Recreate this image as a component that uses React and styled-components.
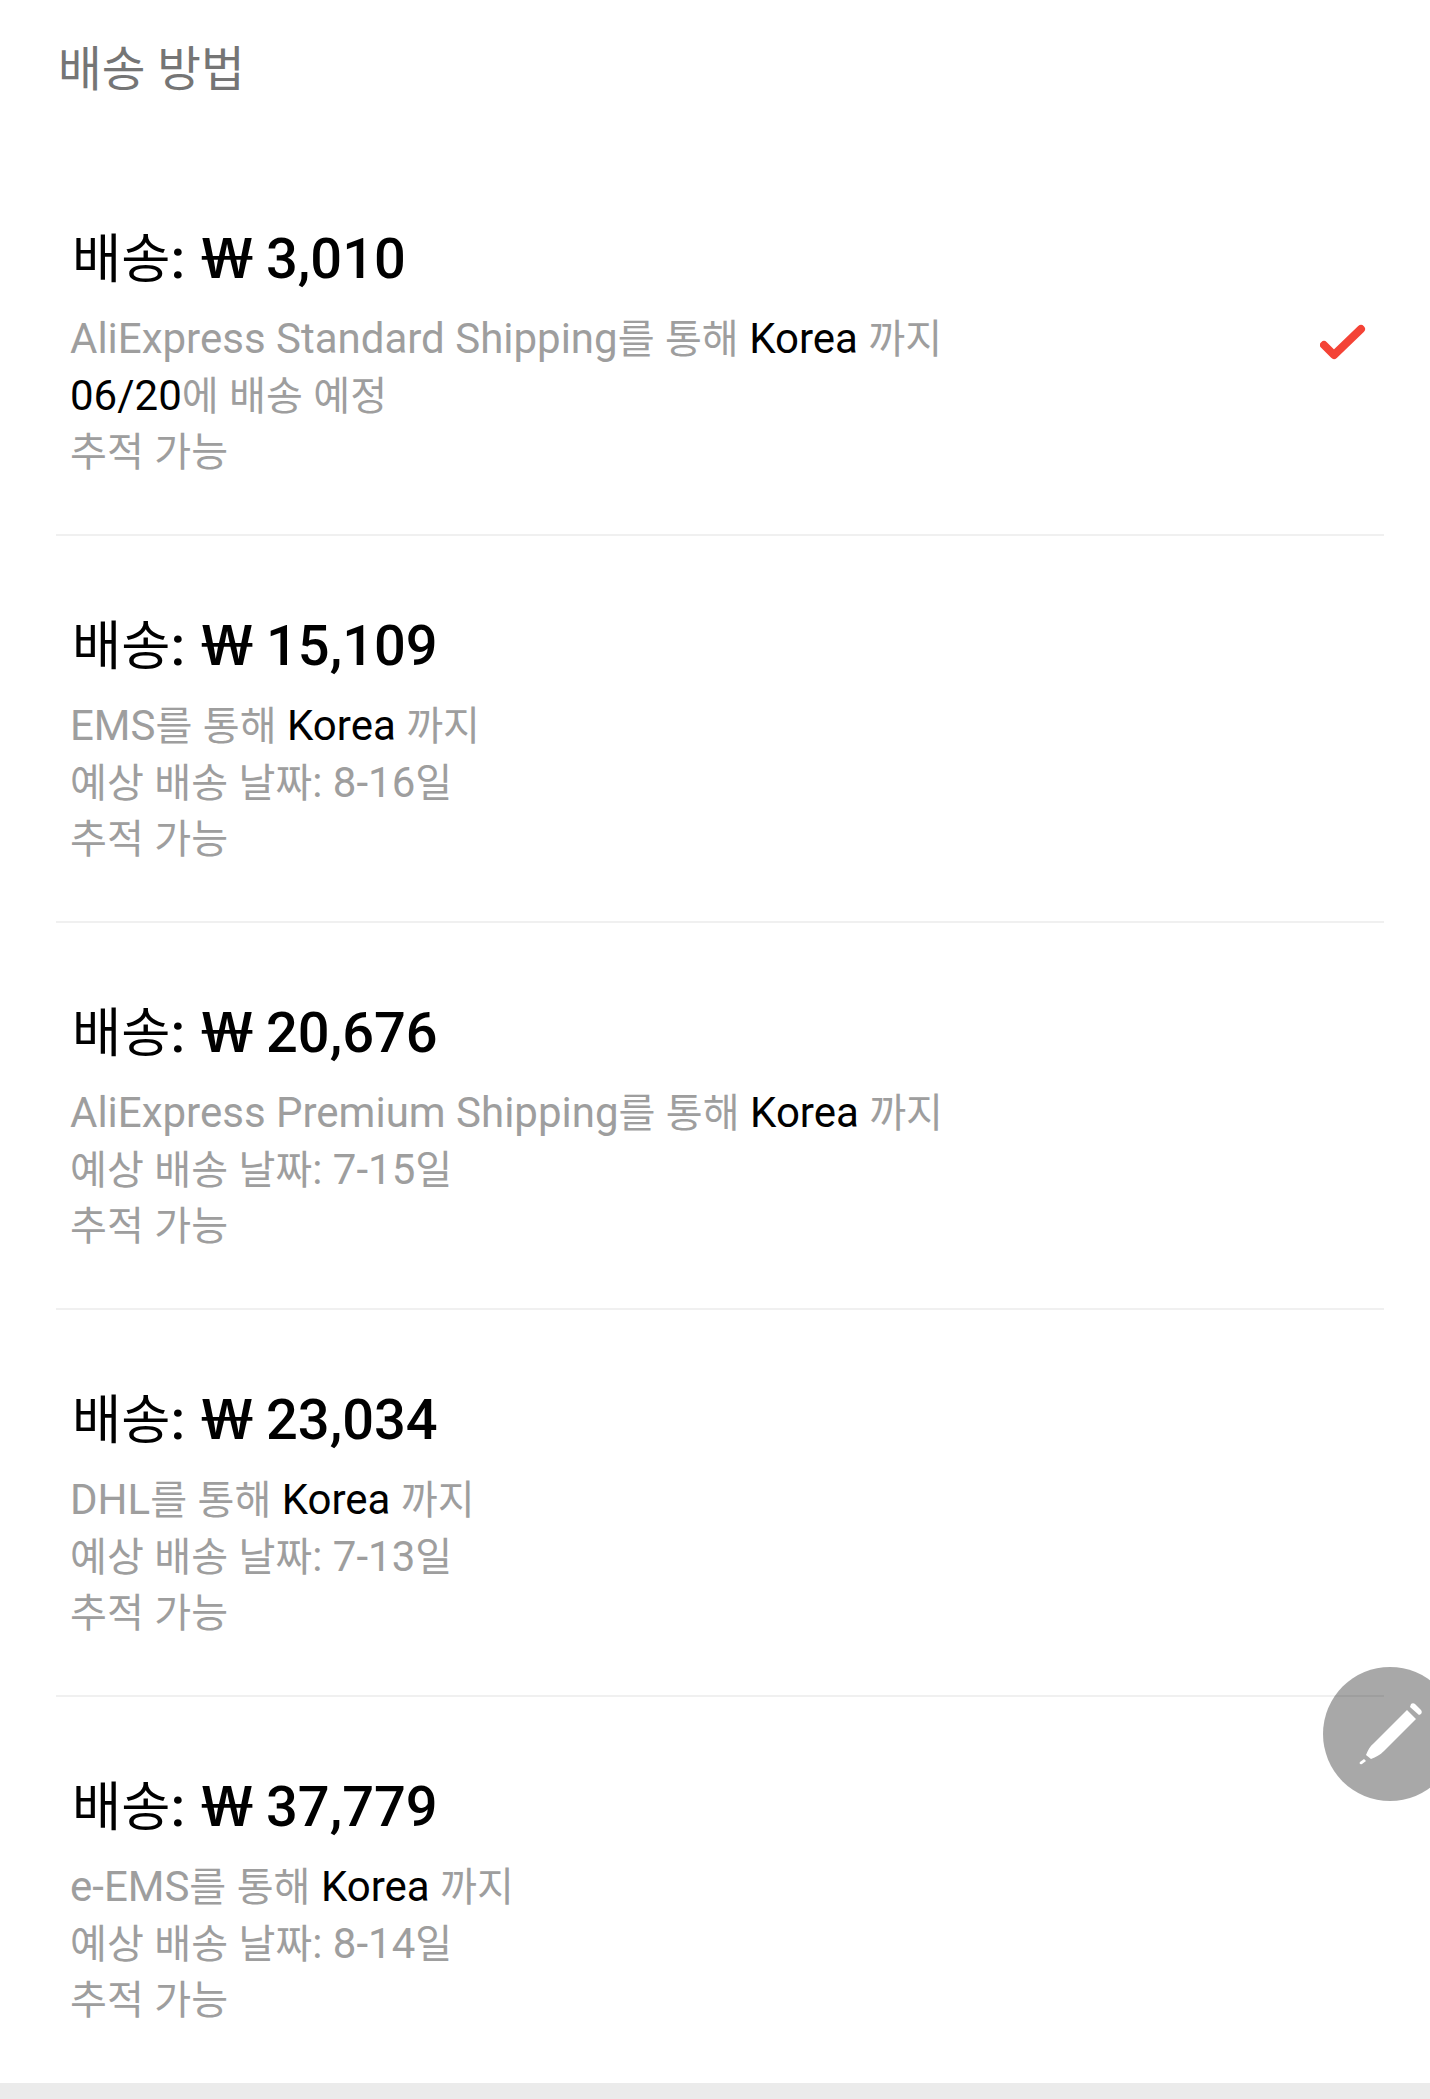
import styled, { createGlobalStyle } from "styled-components";

const methods = [
  { price: "3,010", carrier: "AliExpress Standard Shipping", date: "06/20", selected: true },
  { price: "15,109", carrier: "EMS", range: "8-16" },
  { price: "20,676", carrier: "AliExpress Premium Shipping", range: "7-15" },
  { price: "23,034", carrier: "DHL", range: "7-13" },
  { price: "37,779", carrier: "e-EMS", range: "8-14" },
];

// Hangul runs are set slightly smaller than the Latin around them
const Ko = ({ children }) =>
  children.split(/([가-힣]+)/).map((part, i) => (i % 2 ? <Hangul key={i}>{part}</Hangul> : part));

const App = () => {
  return (
    <Page>
      <GlobalStyle />
      <Title>배송 방법</Title>
      <List>
        {methods.map((m) => (
          <Row key={m.price}>
            <Price>
              <Ko>배송: </Ko>
              <Won>₩</Won> {m.price}
            </Price>
            <Line>
              <Ko>{`${m.carrier}를 통해 `}</Ko>
              <Dark>Korea</Dark> <Ko>까지</Ko>
            </Line>
            {m.date ? (
              <Line>
                <Dark>{m.date}</Dark>
                <Ko>에 배송 예정</Ko>
              </Line>
            ) : (
              <Line>
                <Ko>{`예상 배송 날짜: ${m.range}일`}</Ko>
              </Line>
            )}
            <Line>
              <Ko>추적 가능</Ko>
            </Line>
            {m.selected && (
              <Check viewBox="0 0 46 36">
                <path d="M4 21 L14 31 L41 5" />
              </Check>
            )}
          </Row>
        ))}
      </List>
      <BottomBar />
      <Fab>
        <svg width="70" height="70" viewBox="0 0 70 70" fill="#fff">
          <path d="M52 11 L61 20 L29 52 C25 56 21 58 16 60 L11 56 C13 51 15 47 19 44 Z" />
          <path d="M56 5 C57 4 59 4 60 5 L66 11 C67 12 67 14 66 15 L64 16 L55 8 Z" />
          <path d="M9 60 L11 62 L7 65 C5 66 4 64 5 63 Z" />
        </svg>
      </Fab>
    </Page>
  );
};

export default App;

const GlobalStyle = createGlobalStyle`
  body {
    margin: 0;
    background: #fff;
    font-family: Roboto, "Noto Sans CJK KR", sans-serif;
  }
`;

const Page = styled.div`
  position: relative;
  width: 1430px;
  height: 2099px;
  overflow: hidden;
  background: #fff;
`;

const Title = styled.h1`
  margin: 0;
  padding: 36px 0 0 58px;
  height: 112px;
  box-sizing: border-box;
  font-size: 47.5px;
  line-height: 68px;
  font-weight: 400;
  color: #757575;
`;

const List = styled.div`
  padding: 0 46px 0 56px;
`;

const Row = styled.div`
  position: relative;
  height: 387px;
  box-sizing: border-box;
  padding: 76px 0 0 16px;
  border-bottom: 2px solid #f0f0f0;

  &:first-child {
    height: 424px;
    padding-top: 113px;
  }

  &:last-child {
    border-bottom: none;
  }
`;

const Hangul = styled.span`
  font-size: 0.955em;
  line-height: 0;
`;

const Price = styled.div`
  margin: 0 0 18px 0;
  font-size: 56px;
  line-height: 68px;
  font-weight: 500;
  color: #000;

  ${Hangul} {
    font-weight: 400;
  }
`;

// the won sign is a single-bar glyph, widened to the width of a capital W
const Won = styled.span`
  display: inline-block;
  width: 50px;
  margin-left: 3px;
  line-height: 0;
  text-align: center;
  font-family: "Noto Sans", sans-serif;
  transform: scaleX(1.35);
`;

const Line = styled.div`
  margin-left: -2px;
  font-size: 42px;
  line-height: 56.6px;
  color: #9e9e9e;
`;

const Dark = styled.span`
  color: #000;
`;

const Check = styled.svg`
  position: absolute;
  right: 18px;
  top: 212px;
  width: 46px;
  height: 36px;
  fill: none;
  stroke: #f44336;
  stroke-width: 8;
  stroke-linecap: round;
  stroke-linejoin: round;
`;

const BottomBar = styled.div`
  position: absolute;
  left: 0;
  right: 0;
  bottom: 0;
  height: 16px;
  background: #ebebeb;
`;

const Fab = styled.div`
  position: absolute;
  left: 1323px;
  top: 1667px;
  width: 134px;
  height: 134px;
  border-radius: 50%;
  background: rgba(0, 0, 0, 0.34);
  display: flex;
  align-items: center;
  justify-content: center;
`;
